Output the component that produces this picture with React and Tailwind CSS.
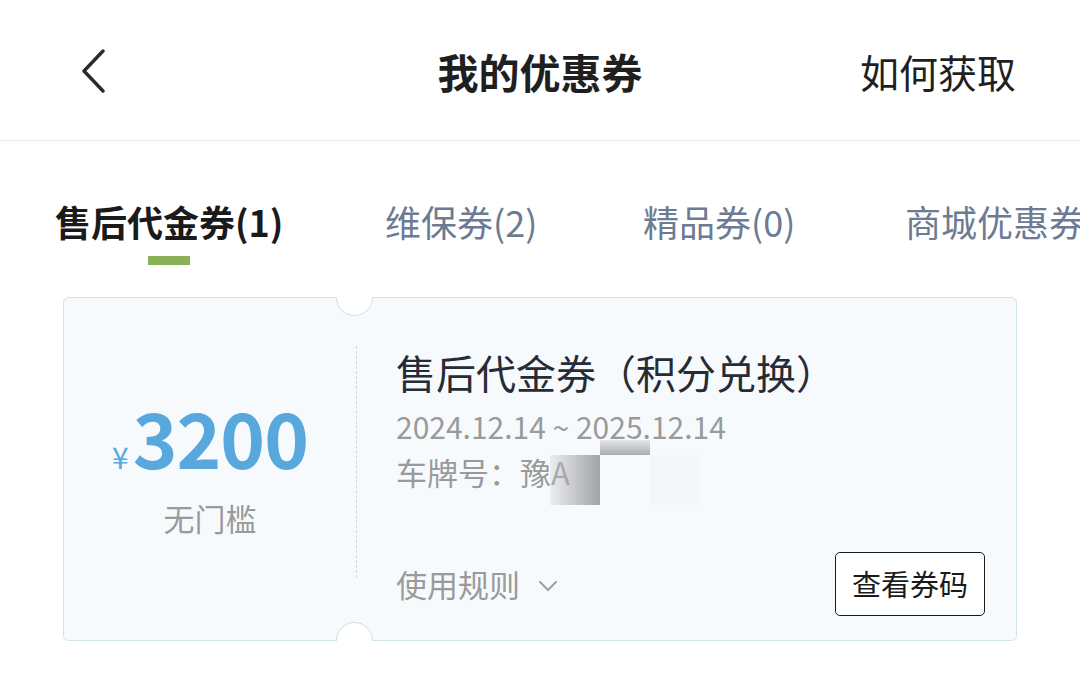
import { useState } from "react";

const FONT = { fontFamily: '"Noto Sans CJK SC", "Noto Sans", sans-serif' };

const tabs = [
  { label: "售后代金券(1)", slot: "w-[330px]" },
  { label: "维保券(2)", slot: "w-[258px]" },
  { label: "精品券(0)", slot: "w-[262px]" },
  { label: "商城优惠券(0)", slot: "w-auto" },
];

function BackIcon() {
  return (
    <svg width="30" height="44" viewBox="0 0 30 44" fill="none">
      <path d="M25 2 L6 22 L25 42" stroke="#2b2b2b" strokeWidth="3.4" strokeLinecap="round" strokeLinejoin="round" />
    </svg>
  );
}

function Coupon() {
  return (
    <div className="relative mx-[63px] h-[344px] w-[954px] overflow-hidden rounded-[6px] bg-[#d3e3ea] p-px">
      <div className="flex h-full w-full rounded-[5px] bg-[#f7fafd]">
        {/* amount */}
        <div className="flex w-[292px] shrink-0 flex-col items-center pt-[98px]">
          <div className="flex items-baseline leading-[80px] text-[#58a8dd]">
            <span className="mr-[4px] text-[30px] font-normal">¥</span>
            <span className="text-[76px] font-bold tracking-[-1px]">3200</span>
          </div>
          <div className="mt-[2px] text-[31px] leading-[40px] text-[#9a9a9a]">无门槛</div>
        </div>

        <div className="mt-[48px] h-[232px] border-l border-dashed border-[#ccd7dd]" />

        {/* details */}
        <div className="flex flex-1 flex-col pl-[39px] pr-[31px] pt-[50px]">
          <div className="text-[40px] leading-[48px] text-[#262b36]">售后代金券（积分兑换）</div>
          <div className="mt-[10px] text-[30px] leading-[40px] text-[#9a9a9a]">2024.12.14 ~ 2025.12.14</div>
          <div className="mt-[6px] text-[31px] leading-[40px] text-[#9a9a9a]">车牌号：豫A</div>
          <div className="mt-[60px] flex h-[64px] items-center justify-between">
            <div className="flex items-center text-[31px] leading-[40px] text-[#9a9a9a]">
              使用规则
              <svg className="ml-[18px] mt-[4px]" width="20" height="12" viewBox="0 0 20 12" fill="none">
                <path d="M2 2 L10 10 L18 2" stroke="#a0a0a0" strokeWidth="2" strokeLinecap="round" strokeLinejoin="round" />
              </svg>
            </div>
            <button className="flex h-[64px] w-[150px] items-center justify-center rounded-[5px] border-[1.5px] border-[#1a1a1a] bg-white text-[29px] text-[#1a1a1a]">
              查看券码
            </button>
          </div>
        </div>
      </div>

      {/* notches */}
      <div className="absolute left-[273px] top-[-18px] h-[37px] w-[37px] rounded-full border-[1.5px] border-[#cbdde5] bg-white" />
      <div className="absolute bottom-[-18px] left-[273px] h-[37px] w-[37px] rounded-full border-[1.5px] border-[#cbdde5] bg-white" />

      {/* mosaic over plate number */}
      <div className="absolute left-[537px] top-[143px] h-[15px] w-[50px] bg-gradient-to-b from-[#dcdce0]/70 to-[#adadb1]" />
      <div className="absolute left-[487px] top-[158px] h-[50px] w-[50px] bg-gradient-to-r from-[#d0d0d4]/30 to-[#a2a3a7]" />
      <div className="absolute left-[587px] top-[158px] h-[50px] w-[50px] bg-[#f4f6f9]" />
    </div>
  );
}

export default function App() {
  const [active, setActive] = useState(0);

  return (
    <div className="h-[674px] w-[1080px] overflow-hidden bg-white" style={FONT}>
      <header className="grid h-[141px] grid-cols-[1fr_auto_1fr] items-center border-b border-[#e8e8e8] pt-[2px]">
        <div className="pl-[78px]">
          <BackIcon />
        </div>
        <h1 className="text-[41px] font-bold leading-[50px] text-[#1f1f1f]">我的优惠券</h1>
        <div className="pr-[64px] text-right text-[39px] font-normal leading-[50px] text-[#1f1f1f]">如何获取</div>
      </header>

      <nav className="flex whitespace-nowrap pl-[55px] pt-[60px]">
        {tabs.map((t, i) => (
          <div key={t.label} className={`${t.slot} shrink-0`}>
            <button onClick={() => setActive(i)} className="inline-flex flex-col items-center">
              <span
                className={
                  i === active
                    ? "text-[36px] font-bold leading-[40px] text-[#1a1a1a]"
                    : "text-[36px] leading-[40px] text-[#6c7b92]"
                }
              >
                {t.label}
              </span>
              {i === active && <span className="mt-[15px] h-[9px] w-[42px] bg-[#8bb158]" />}
            </button>
          </div>
        ))}
      </nav>

      <div className="mt-[32px]">
        <Coupon />
      </div>
    </div>
  );
}
